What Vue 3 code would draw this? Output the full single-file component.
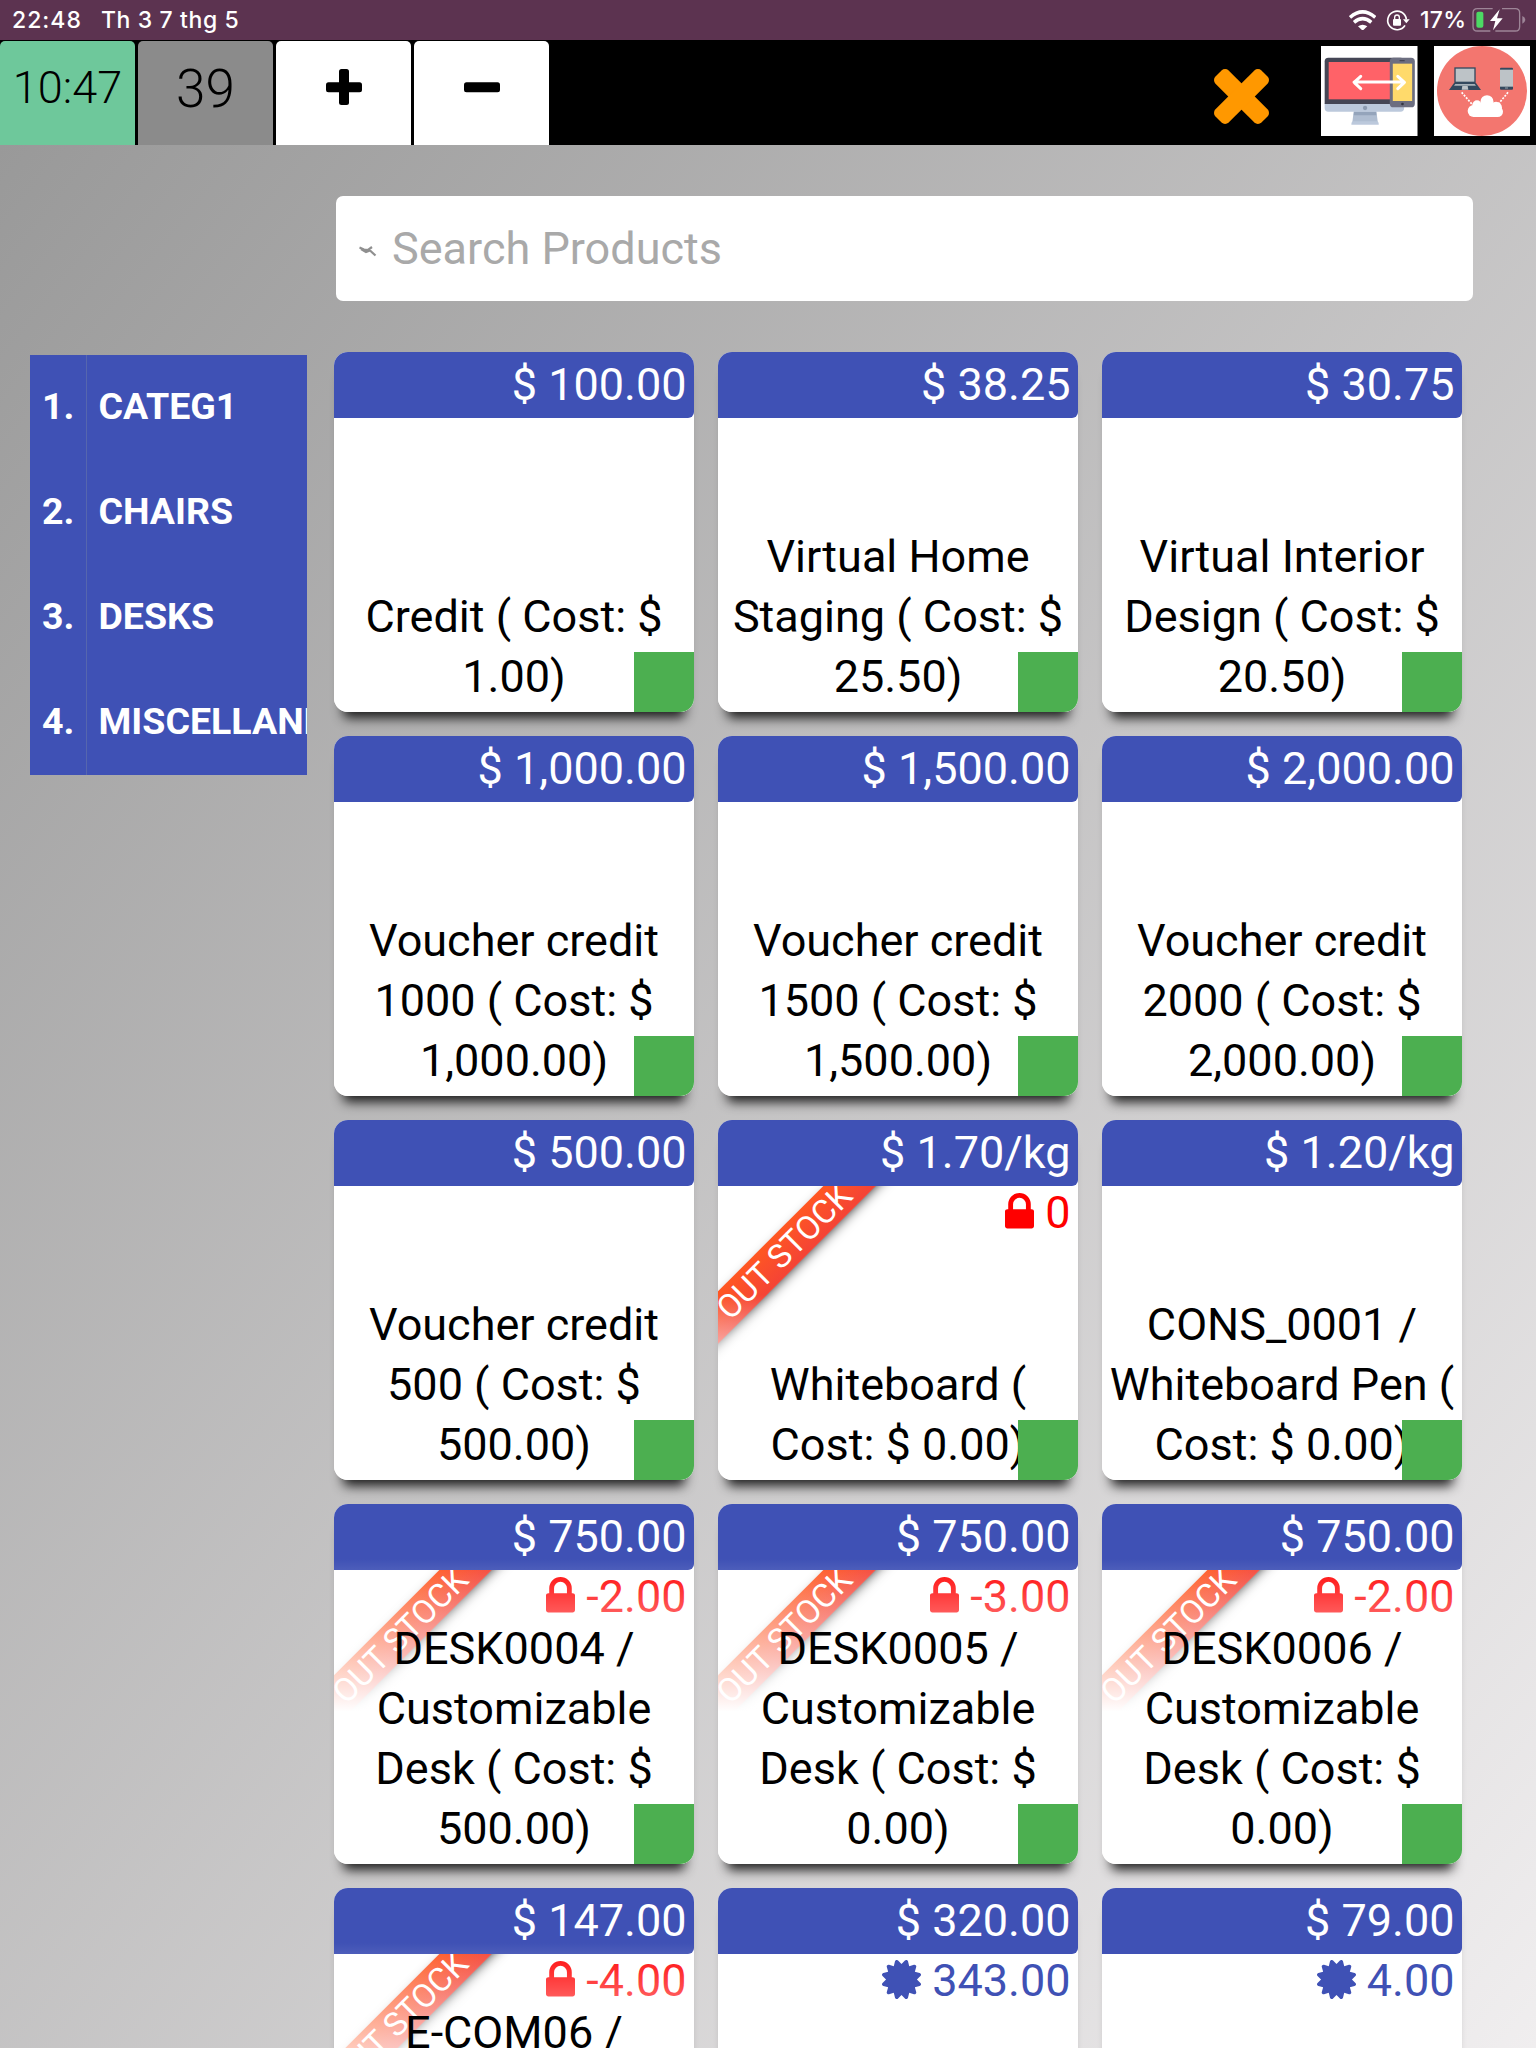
<script setup>
const categories = ['CATEG1', 'CHAIRS', 'DESKS', 'MISCELLANE']

const products = [
  { price: '$ 100.00', name: 'Credit ( Cost: $\n1.00)' },
  { price: '$ 38.25', name: 'Virtual Home\nStaging ( Cost: $\n25.50)' },
  { price: '$ 30.75', name: 'Virtual Interior\nDesign ( Cost: $\n20.50)' },
  { price: '$ 1,000.00', name: 'Voucher credit\n1000 ( Cost: $\n1,000.00)' },
  { price: '$ 1,500.00', name: 'Voucher credit\n1500 ( Cost: $\n1,500.00)' },
  { price: '$ 2,000.00', name: 'Voucher credit\n2000 ( Cost: $\n2,000.00)' },
  { price: '$ 500.00', name: 'Voucher credit\n500 ( Cost: $\n500.00)' },
  { price: '$ 1.70/kg', name: 'Whiteboard (\nCost: $ 0.00)', out: true, qty: '0' },
  { price: '$ 1.20/kg', name: 'CONS_0001 /\nWhiteboard Pen (\nCost: $ 0.00)' },
  { price: '$ 750.00', name: 'DESK0004 /\nCustomizable\nDesk ( Cost: $\n500.00)', out: true, qty: '-2.00' },
  { price: '$ 750.00', name: 'DESK0005 /\nCustomizable\nDesk ( Cost: $\n0.00)', out: true, qty: '-3.00' },
  { price: '$ 750.00', name: 'DESK0006 /\nCustomizable\nDesk ( Cost: $\n0.00)', out: true, qty: '-2.00' },
  { price: '$ 147.00', name: 'E-COM06 /\n\n\n\n', out: true, qty: '-4.00' },
  { price: '$ 320.00', name: '', qty: '343.00' },
  { price: '$ 79.00', name: '', qty: '4.00' },
]
</script>

<template>
  <div class="screen">
    <div class="status">
      <span class="clock">22:48</span>
      <span class="date">Th 3 7 thg 5</span>
      <svg class="wifi" viewBox="508 28 82 62">
        <g fill="none" stroke="#fff" stroke-width="10.500">
          <path d="M511 50Q549 17 587 50" />
          <path d="M523 65Q549 43 575 65" />
        </g>
        <path d="M535 77Q549 67 563 77L549 90Z" fill="#fff" />
      </svg>
      <svg class="rotation" viewBox="618 26 72 68">
        <path d="M675 75A28 28 0 1 1 679 57" fill="none" stroke="#fff" stroke-width="5" />
        <path d="M669 57H689L679 69Z" fill="#fff" />
        <rect x="639" y="56" width="24" height="20" rx="3" fill="#fff" />
        <path d="M644 57v-6a7 7 0 0 1 14 0v6" fill="none" stroke="#fff" stroke-width="4" />
      </svg>
      <span class="percent">17%</span>
      <svg class="battery" viewBox="878 22 162 76">
        <path d="M940 27H894Q881 27 881 40V81Q881 94 894 94H933M968 27H1008Q1021 27 1021 40V81Q1021 94 1008 94H948" fill="none" stroke="#9d8597" stroke-width="4" />
        <path d="M1029 49Q1038 53 1038 60T1029 72Z" fill="#9d8597" />
        <rect x="891" y="36" width="21" height="48" rx="6" fill="#4cd964" />
        <path d="M961 29L932 64H948L941 92L970 56H953Z" fill="#fff" />
      </svg>
    </div>

    <div class="topbar">
      <div class="tile time">10:47</div>
      <div class="tile count">39</div>
      <div class="tile sign">
        <svg viewBox="0 0 36 36"><rect x="13" width="10" height="36" rx="2.5" /><rect y="13.3" width="36" height="10" rx="2.5" /></svg>
      </div>
      <div class="tile sign">
        <svg viewBox="0 0 36 36"><rect y="13.3" width="36" height="10" rx="2.5" /></svg>
      </div>
      <svg class="close" viewBox="-27.5 -27.5 55 55">
        <g fill="#ff9800">
          <rect x="-32.5" y="-9.3" width="65" height="18.6" rx="5" transform="rotate(45)" />
          <rect x="-32.5" y="-9.3" width="65" height="18.6" rx="5" transform="rotate(-45)" />
        </g>
      </svg>
      <svg class="devices" viewBox="424 138 289 270" preserveAspectRatio="none">
        <rect x="424" y="138" width="289" height="270" fill="#fff" />
        <path d="M522 334H590L594 366H518Z" fill="#afbdd1" />
        <path d="M523 335H589L590 346H522Z" fill="#94a4bb" />
        <path d="M515 374Q515 364 522 364H590Q597 364 597 374Z" fill="#bcc9dc" />
        <path d="M435 310H673V324Q673 335 662 335H446Q435 335 435 324Z" fill="#bcc9dc" />
        <path d="M435 312V184Q435 173 446 173H662Q673 173 673 184V312Z" fill="#454655" />
        <rect x="447" y="186" width="190" height="112" fill="#ff6268" />
        <circle cx="556" cy="324" r="6.500" fill="#8d9cb1" />
        <rect x="630" y="173" width="75" height="149" rx="11" fill="#6c6e80" />
        <rect x="639" y="191" width="58" height="112" fill="#ffda6b" />
        <rect x="659" y="180" width="16" height="4" rx="2" fill="#454655" />
        <circle cx="668" cy="312" r="4" fill="#343541" />
        <path d="M523 246H673M543 229L523 247L543 266M654 229L674 247L654 266" fill="none" stroke="#fff" stroke-width="9" stroke-linecap="round" stroke-linejoin="round" />
      </svg>
      <svg class="cloud" viewBox="762 138 288 270" preserveAspectRatio="none">
        <rect x="762" y="138" width="288" height="270" fill="#fff" />
        <circle cx="906" cy="273" r="135" fill="#f3766f" />
        <path d="M823 202H887V249H823Z" fill="#34495e" />
        <path d="M827 206H883V245H827Z" fill="#bdc3c7" />
        <path d="M822 249H888L903 270H807Z" fill="#34495e" />
        <path d="M826 252H884L888 257H822Z" fill="#a9b3ba" />
        <path d="M847 258H863L865 269H845Z" fill="#bdc3c7" />
        <rect x="960" y="203" width="39" height="66" rx="3" fill="#34495e" />
        <rect x="960" y="209" width="39" height="51" fill="#bdc3c7" />
        <rect x="975" y="262" width="9" height="4" fill="#7e8c98" />
        <path d="M845 277L878 315M984 277L956 311" stroke="#fff" stroke-width="5" stroke-dasharray="6 4" />
        <g fill="#fff">
          <circle cx="881" cy="333" r="18" />
          <circle cx="891" cy="315" r="14" />
          <circle cx="921" cy="305" r="19.500" />
          <circle cx="948" cy="323" r="18" />
          <circle cx="953" cy="335" r="16" />
          <rect x="880" y="312" width="74" height="39" />
        </g>
      </svg>
    </div>

    <div class="content">
      <div class="sidebar">
        <div v-for="(c, i) in categories" :key="c" class="category">
          <span class="index">{{ i + 1 }}.</span>
          <span class="label">{{ c }}</span>
        </div>
      </div>

      <div class="main">
        <div class="search">
          <svg viewBox="0 0 18 11">
            <path d="M.5 1.500L5 3.500L9 4L13 1M2 3L7 6L11 4.500L16.500 9.500" fill="none" stroke="#8f8f8f" stroke-width="2.200" />
          </svg>
          <span>Search Products</span>
        </div>

        <div class="grid">
          <div v-for="(p, i) in products" :key="i" class="card">
            <div class="price">{{ p.price }}</div>
            <div class="body">
              <div v-if="p.out" class="ribbon">OUT STOCK</div>
              <div v-if="p.qty" class="qty" :class="{ low: p.out }">
                <svg v-if="p.out" class="lock" viewBox="320 128 1152 1408">
                  <path d="M640 768h512v-192q0-106-75-181t-181-75-181 75-75 181v192zm832 96v576q0 40-28 68t-68 28h-960q-40 0-68-28t-28-68v-576q0-40 28-68t68-28h32v-192q0-184 132-316t316-132 316 132 132 316v192h32q40 0 68 28t28 68z" />
                </svg>
                <svg v-else class="seal" viewBox="128 128 1536 1536">
                  <path d="M1504 896l138 135q30 28 20 70-12 41-52 51l-188 48 53 186q12 41-19 70-29 31-70 19l-186-53-48 188q-10 40-51 52-12 2-19 2-31 0-51-22l-135-138-135 138q-28 30-70 20-41-11-51-52l-48-188-186 53q-41 12-70-19-31-29-19-70l53-186-188-48q-40-10-52-51-10-42 20-70l138-135-138-135q-30-28-20-70 12-41 52-51l188-48-53-186q-12-41 19-70 29-31 70-19l186 53 48-188q10-41 51-51 41-12 70 19l135 139 135-139q29-30 70-19 41 10 51 51l48 188 186-53q41-12 70 19 31 29 19 70l-53 186 188 48q40 10 52 51 10 42-20 70z" />
                </svg>
                <span>{{ p.qty }}</span>
              </div>
            </div>
            <div class="name">{{ p.name }}</div>
            <div class="corner"></div>
          </div>
        </div>
      </div>
    </div>
  </div>
</template>

<style scoped>
.screen {
  width: 1536px;
  height: 2048px;
  overflow: hidden;
  display: flex;
  flex-direction: column;
  font-family: Roboto, "Liberation Sans", sans-serif;
  background: #999;
}
.status {
  height: 40px;
  flex: none;
  display: flex;
  align-items: center;
  box-sizing: border-box;
  padding: 0 10px 0 12px;
  background: #5c3350;
  color: #fff;
  font: 500 23px/40px Inter, sans-serif;
}
.clock { width: 89px; letter-spacing: 1px; }
.date { flex: 1; white-space: nowrap; letter-spacing: .6px; }
.wifi { width: 27.3px; height: 20.7px; margin-right: 10px; }
.rotation { width: 24px; height: 22.7px; margin-right: 10px; }
.percent { width: 46px; margin-right: 6px; letter-spacing: .3px; }
.battery { width: 54px; height: 25.3px; }

.topbar {
  height: 105px;
  flex: none;
  display: flex;
  box-sizing: border-box;
  padding: 1px 6px 0 0;
  background: #000;
}
.tile {
  width: 135px;
  height: 104px;
  flex: none;
  margin-right: 3px;
  border-radius: 5px 5px 0 0;
  text-align: center;
  font-weight: 300;
}
.time { background: #6ec89b; font-size: 45px; line-height: 93px; }
.count { background: #8b8b8b; font-size: 53px; line-height: 96px; }
.sign { background: #fff; display: flex; justify-content: center; }
.sign svg { width: 36px; height: 36px; margin-top: 28px; }
.close { width: 55px; height: 55px; margin: 28px 0 0 auto; }
.devices { width: 96.500px; height: 90px; margin: 5px 0 0 52px; }
.cloud { width: 96px; height: 90px; margin: 5px 0 0 16.200px; }

.content {
  flex: 1;
  display: flex;
  min-height: 0;
  background: linear-gradient(to right bottom, #999, #f0eeef);
}
.sidebar {
  width: 277px;
  height: 420px;
  flex: none;
  margin: 210px 0 0 30px;
  overflow: hidden;
  background: #3f51b5;
  color: #fff;
  font-weight: 700;
  font-size: 37.500px;
}
.category { height: 105px; display: flex; line-height: 102px; white-space: nowrap; }
.index { width: 57px; flex: none; box-sizing: border-box; padding-left: 12px; border-right: 1px solid #5666ae; }
.label { padding-left: 11.500px; }

.main { margin-left: 27px; padding-top: 51px; }
.search {
  height: 105px;
  width: 1136.500px;
  margin-left: 2px;
  box-sizing: border-box;
  padding-left: 23px;
  display: flex;
  align-items: center;
  border-radius: 7px;
  background: #fff;
  color: #a9a9a9;
  font-size: 45px;
}
.search svg { width: 18px; height: 11px; margin: 6px 15px 0 0; }
.grid {
  margin-top: 51px;
  display: grid;
  grid-template-columns: repeat(3, 360px);
  grid-auto-rows: 360px;
  gap: 24px;
}
.card {
  position: relative;
  display: flex;
  flex-direction: column;
  border-radius: 14px;
  background: #fff;
  font-size: 45px;
  box-shadow: 0 15px 12px -9px rgba(0, 0, 0, .85);
}
.price {
  height: 66px;
  flex: none;
  box-sizing: border-box;
  padding-right: 7.500px;
  border-radius: 14px 14px 6px 0;
  background: #3f51b5;
  color: #fff;
  text-align: right;
  line-height: 66px;
}
.body { position: relative; flex: 1; overflow: hidden; border-radius: 0 0 14px 14px; }
.qty {
  display: flex;
  justify-content: flex-end;
  padding-right: 7.500px;
  line-height: 53px;
  color: #3f51b5;
  fill: #3f51b5;
}
.qty.low { color: #f00; fill: #f00; }
.lock { width: 29px; height: 35.500px; margin: 7px 11px 0 0; }
.seal { width: 39px; height: 39px; margin: 6px 11px 0 0; }
.ribbon {
  position: absolute;
  left: -84px;
  top: 47.300px;
  width: 300px;
  height: 37px;
  transform: rotate(-45deg);
  background: linear-gradient(#ff5722, #f44336);
  box-shadow: 0 4px 13px -5px #000;
  color: #fff;
  font-size: 33px;
  line-height: 37px;
  text-align: center;
}
.name {
  position: absolute;
  left: 0;
  right: 0;
  bottom: 0;
  padding: 60px 6px 5px;
  border-radius: 0 0 14px 14px;
  background: linear-gradient(rgba(255, 255, 255, 0), #fff, #fff);
  color: #000;
  line-height: 60px;
  text-align: center;
  white-space: pre;
}
.corner {
  position: absolute;
  right: 0;
  bottom: 0;
  width: 60px;
  height: 60px;
  border-radius: 0 0 14px 0;
  background: #4caf50;
}
</style>

<style>
body { margin: 0; overflow: hidden; }
</style>
